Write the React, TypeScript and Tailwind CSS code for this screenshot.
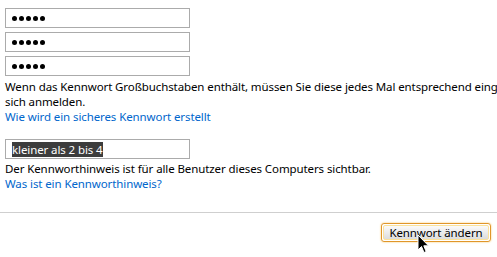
import React from 'react';

const Dots = () => (
  <div className="flex items-center gap-[2px]">
    {[0, 1, 2, 3, 4].map((i) => (
      <span key={i} className="block w-[5px] h-[5px] rounded-full bg-black" />
    ))}
  </div>
);

const PwField = () => (
  <div className="w-[185px] h-[20px] border border-[#ababab] bg-white flex items-center pl-[6px]">
    <Dots />
  </div>
);

export default function App() {
  return (
    <div
      className="relative w-[497px] h-[257px] overflow-hidden bg-white text-black text-[11.5px] leading-[15px] tracking-[-0.1px]"
      style={{ fontFamily: '"Noto Sans", "Open Sans", sans-serif' }}
    >
      <div className="pt-[8px] pl-[5px] flex flex-col gap-[4px]">
        <PwField />
        <PwField />
        <PwField />
      </div>

      <div className="pl-[5px] mt-[3px] whitespace-nowrap">
        <div>Wenn das Kennwort Großbuchstaben enthält, müssen Sie diese jedes Mal entsprechend eingeben, wenn Sie</div>
        <div>sich anmelden.</div>
        <div className="text-[#0066cc]">Wie wird ein sicheres Kennwort erstellt</div>
      </div>

      <div className="pl-[5px] mt-[15px]">
        <div className="w-[185px] h-[20px] border border-[#ababab] bg-white flex items-center pl-[6px]">
          <span className="bg-[#3c3c3c] text-white leading-[15px]">kleiner als 2 bis 4</span>
        </div>
      </div>

      <div className="pl-[5px] mt-[2px] whitespace-nowrap">
        <div>Der Kennworthinweis ist für alle Benutzer dieses Computers sichtbar.</div>
        <div className="text-[#0066cc]">Was ist ein Kennworthinweis?</div>
      </div>

      <div className="mt-[21px] h-px bg-[#cfcfcf]" />

      <div className="flex justify-end pr-[6px] mt-[10px]">
        <div className="w-[110px] h-[19px] rounded-[3px] border border-[#e0962a] p-px shadow-[0_0_2px_#f5c35a]">
          <div className="h-full rounded-[2px] border border-[#fbe29a] bg-gradient-to-b from-[#fafafa] via-[#ececec] to-[#dcdcdc] flex items-center justify-center leading-none">
            Kennwort ändern
          </div>
        </div>
      </div>

      <svg className="absolute left-[417px] top-[234px]" width="13" height="20" viewBox="0 0 13 20">
        <path d="M1 1 L1 16 L4.5 12.5 L7 18.5 L9.2 17.6 L6.8 11.8 L11.5 11.8 Z" fill="#000" stroke="#fff" strokeWidth="1" />
      </svg>
    </div>
  );
}
